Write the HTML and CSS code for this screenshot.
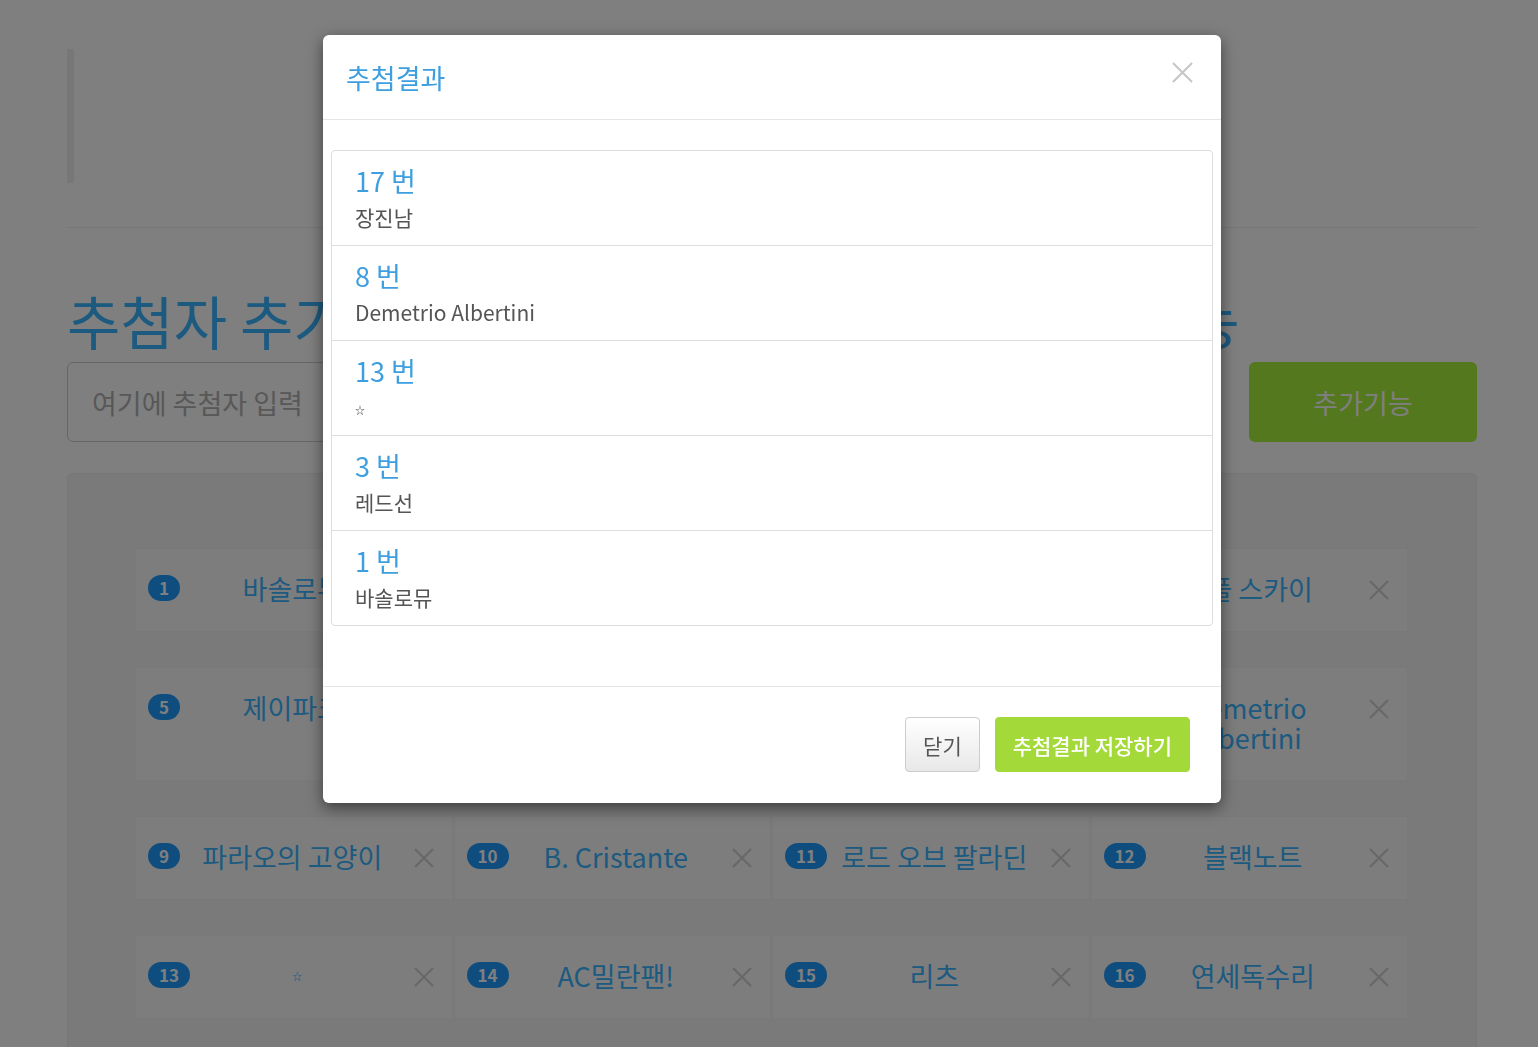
FILE: index.html
```html
<!DOCTYPE html>
<html>
	<head>
		<meta charset="UTF-8">
		<title>추첨</title>
		<link rel="stylesheet" href="styles.css">
	</head>
	<body>
		<div class="container">
			<blockquote class="notice"></blockquote>
			<hr class="line">
			<h1 class="title">추첨자 추가하고 버튼으로 바로추첨하는 추첨기능</h1>
			<div class="add-row">
				<input class="add-input" type="text" placeholder="여기에 추첨자 입력">
				<button class="add-btn">추가기능</button>
			</div>
			<div class="well">
				<ul class="cards">
					<li class="card"><span class="num">1</span><span class="name">바솔로뮤</span><span class="del"><svg viewBox="0 0 22 22"><path d="M2 2L20 20M20 2L2 20"/></svg></span></li>
					<li class="card"><span class="num">2</span><span class="name">장미꽃</span><span class="del"><svg viewBox="0 0 22 22"><path d="M2 2L20 20M20 2L2 20"/></svg></span></li>
					<li class="card"><span class="num">3</span><span class="name">레드선</span><span class="del"><svg viewBox="0 0 22 22"><path d="M2 2L20 20M20 2L2 20"/></svg></span></li>
					<li class="card"><span class="num">4</span><span class="name">원풀 스카이</span><span class="del"><svg viewBox="0 0 22 22"><path d="M2 2L20 20M20 2L2 20"/></svg></span></li>
					<li class="card"><span class="num">5</span><span class="name">제이파크</span><span class="del"><svg viewBox="0 0 22 22"><path d="M2 2L20 20M20 2L2 20"/></svg></span></li>
					<li class="card"><span class="num">6</span><span class="name">루루</span><span class="del"><svg viewBox="0 0 22 22"><path d="M2 2L20 20M20 2L2 20"/></svg></span></li>
					<li class="card"><span class="num">7</span><span class="name">세븐</span><span class="del"><svg viewBox="0 0 22 22"><path d="M2 2L20 20M20 2L2 20"/></svg></span></li>
					<li class="card"><span class="num">8</span><span class="name">Demetrio Albertini</span><span class="del"><svg viewBox="0 0 22 22"><path d="M2 2L20 20M20 2L2 20"/></svg></span></li>
					<li class="card"><span class="num">9</span><span class="name">파라오의 고양이</span><span class="del"><svg viewBox="0 0 22 22"><path d="M2 2L20 20M20 2L2 20"/></svg></span></li>
					<li class="card"><span class="num">10</span><span class="name">B. Cristante</span><span class="del"><svg viewBox="0 0 22 22"><path d="M2 2L20 20M20 2L2 20"/></svg></span></li>
					<li class="card"><span class="num">11</span><span class="name">로드 오브 팔라딘</span><span class="del"><svg viewBox="0 0 22 22"><path d="M2 2L20 20M20 2L2 20"/></svg></span></li>
					<li class="card"><span class="num">12</span><span class="name">블랙노트</span><span class="del"><svg viewBox="0 0 22 22"><path d="M2 2L20 20M20 2L2 20"/></svg></span></li>
					<li class="card"><span class="num">13</span><span class="name"><small class="star">☆</small></span><span class="del"><svg viewBox="0 0 22 22"><path d="M2 2L20 20M20 2L2 20"/></svg></span></li>
					<li class="card"><span class="num">14</span><span class="name">AC밀란팬!</span><span class="del"><svg viewBox="0 0 22 22"><path d="M2 2L20 20M20 2L2 20"/></svg></span></li>
					<li class="card"><span class="num">15</span><span class="name">리츠</span><span class="del"><svg viewBox="0 0 22 22"><path d="M2 2L20 20M20 2L2 20"/></svg></span></li>
					<li class="card"><span class="num">16</span><span class="name">연세독수리</span><span class="del"><svg viewBox="0 0 22 22"><path d="M2 2L20 20M20 2L2 20"/></svg></span></li>
					<li class="card"><span class="num">17</span><span class="name">장진남</span><span class="del"><svg viewBox="0 0 22 22"><path d="M2 2L20 20M20 2L2 20"/></svg></span></li>
				</ul>
			</div>
		</div>

		<div class="backdrop"></div>

		<div class="modal">
			<div class="modal-header">
				<h4 class="modal-title">추첨결과</h4>
				<span class="modal-close"><svg viewBox="0 0 22 22"><path d="M1 1L21 21M21 1L1 21"/></svg></span>
			</div>
			<div class="modal-body">
				<ul class="result-list">
					<li class="result">
						<div class="result-no">17 번</div>
						<div class="result-name">장진남</div>
					</li>
					<li class="result">
						<div class="result-no">8 번</div>
						<div class="result-name">Demetrio Albertini</div>
					</li>
					<li class="result">
						<div class="result-no">13 번</div>
						<div class="result-name"><small class="star">☆</small></div>
					</li>
					<li class="result">
						<div class="result-no">3 번</div>
						<div class="result-name">레드선</div>
					</li>
					<li class="result">
						<div class="result-no">1 번</div>
						<div class="result-name">바솔로뮤</div>
					</li>
				</ul>
			</div>
			<div class="modal-footer">
				<button class="btn btn-close">닫기</button>
				<button class="btn btn-save">추첨결과 저장하기</button>
			</div>
		</div>
	</body>
</html>
```

FILE: styles.css
```css
*{
	padding: 0;
	margin: 0;
	box-sizing: border-box;
}
ul{
	list-style: none;
}
body{
	font-family: "Noto Sans CJK KR", "Noto Sans", sans-serif;
	background: #fff;
	height: 1047px;
	overflow: hidden;
}
.container{
	width: 1410px;
	margin-left: 67px;
}
.notice{
	margin-top: 49px;
	height: 134px;
	border-left: 7px solid #eee;
}
.line{
	margin-top: 44px;
	border: 0;
	border-top: 1px solid #eee;
}
.title{
	margin-top: 61px;
	font-size: 58px;
	line-height: 62px;
	font-weight: 400;
	color: #3ab4ff;
	white-space: nowrap;
}
.add-row{
	display: flex;
	gap: 40px;
	height: 80px;
	margin-top: 11px;
}
.add-input{
	flex: 1;
	border: 1px solid #ccc;
	border-radius: 6px;
	padding: 0 24px;
	font-family: inherit;
	font-size: 27px;
	color: #555;
}
.add-input::placeholder{
	color: #b0b0b0;
}
.add-btn{
	width: 228px;
	border: 0;
	border-radius: 6px;
	background: #a8f03a;
	color: #fff;
	font-family: inherit;
	font-size: 27px;
}
.well{
	margin-top: 31px;
	padding: 74px 68px 74px 67px;
	background: #f5f5f5;
	border: 1px solid #ededed;
	border-radius: 5px;
}
.cards{
	display: grid;
	grid-template-columns: repeat(4, 1fr);
	column-gap: 1px;
	row-gap: 35px;
}
.card{
	display: flex;
	align-items: flex-start;
	padding: 25px 17px 27px 12px;
	background: #fbfbfb;
	border: 1px solid #f2f2f2;
}
.num{
	min-width: 32px;
	height: 26px;
	margin-top: 1px;
	padding: 0 11px;
	border-radius: 13px;
	background: #1e9aff;
	color: #fff;
	font-size: 17px;
	font-weight: 700;
	line-height: 26px;
	text-align: center;
}
.name{
	flex: 1;
	padding: 0 8px 0 0;
	font-size: 27px;
	line-height: 30px;
	color: #3ab4ff;
	text-align: center;
}
.star{
	font-size: 10px;
	vertical-align: top;
}
.del{
	width: 22px;
	height: 22px;
	margin-top: 5px;
	color: #d0d0d0;
}
.del svg, .modal-close svg{
	display: block;
	width: 100%;
	height: 100%;
	stroke: currentColor;
	stroke-width: 2.3;
	fill: none;
}
.backdrop{
	position: fixed;
	top: 0;
	left: 0;
	right: 0;
	bottom: 0;
	background: rgba(0,0,0,.5);
}
.modal{
	position: absolute;
	top: 35px;
	left: 323px;
	width: 898px;
	background: #fff;
	border-radius: 6px;
	box-shadow: 0 5px 15px rgba(0,0,0,.5);
}
.modal-header{
	display: flex;
	align-items: center;
	justify-content: space-between;
	height: 85px;
	padding: 0 28px 0 23px;
	border-bottom: 1px solid #e5e5e5;
}
.modal-title{
	font-size: 27px;
	font-weight: 400;
	color: #3d9fe0;
}
.modal-close{
	width: 21px;
	height: 21px;
	margin-top: -10px;
	color: #c6c6c6;
}
.modal-close svg{
	stroke-width: 2.2;
}
.modal-body{
	padding: 30px 8px 60px;
}
.result-list{
	border: 1px solid #ddd;
	border-radius: 4px;
}
.result{
	padding: 14px 23px 15px;
	border-top: 1px solid #ddd;
}
.result:first-child{
	border-top: 0;
}
.result-no{
	font-size: 27px;
	line-height: 32px;
	color: #3d9fe0;
}
.result-name{
	height: 26px;
	margin-top: 7px;
	font-size: 21px;
	line-height: 26px;
	color: #555;
}
.result-name .star{
	vertical-align: middle;
}
.modal-footer{
	display: flex;
	justify-content: flex-end;
	gap: 15px;
	padding: 30px 31px 31px;
	border-top: 1px solid #e5e5e5;
}
.btn{
	height: 55px;
	padding: 0 17px;
	border-radius: 4px;
	font-family: inherit;
	font-size: 21px;
	cursor: pointer;
}
.btn-close{
	background: linear-gradient(#fff, #e8e8e8);
	border: 1px solid #ccc;
	color: #555;
}
.btn-save{
	background: #a3d939;
	border: 1px solid #a3d939;
	color: #fff;
	font-weight: 500;
}
```
